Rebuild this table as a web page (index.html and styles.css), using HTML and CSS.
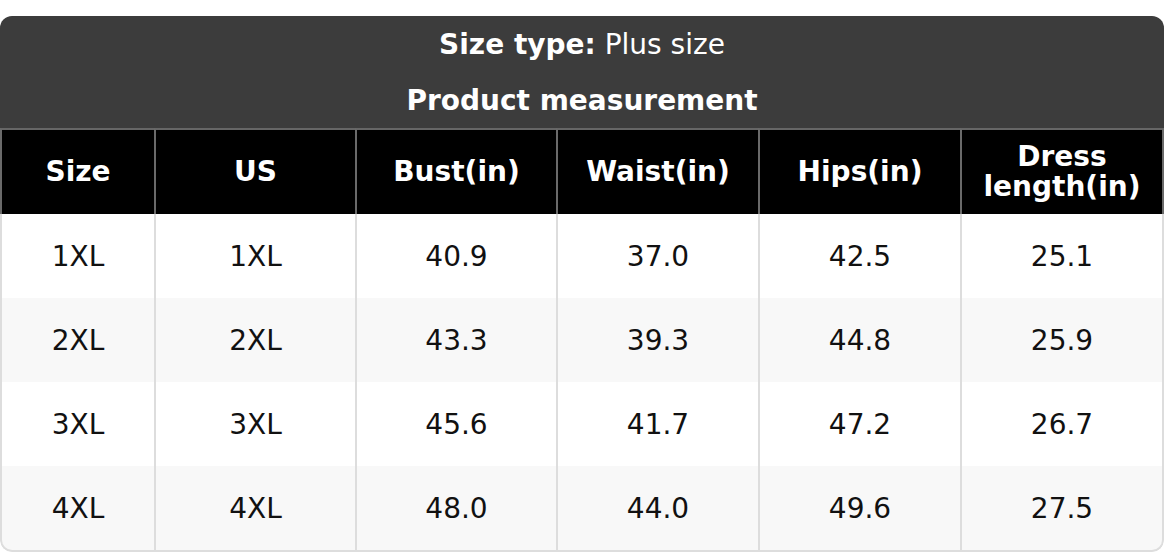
FILE: index.html
```html
<!DOCTYPE html>
<html lang="en">
<head>
<meta charset="utf-8">
<title>Size chart</title>
<link rel="stylesheet" href="styles.css">
</head>
<body>
<div class="page">
  <div class="chart">
    <div class="title"><span class="label">Size type:</span>&nbsp;Plus size</div>
    <div class="title bold">Product measurement</div>
    <table class="grid">
      <colgroup>
        <col class="w-size">
        <col class="w-a">
        <col class="w-a">
        <col class="w-b">
        <col class="w-b">
        <col>
      </colgroup>
      <thead>
        <tr>
          <th>Size</th>
          <th>US</th>
          <th>Bust(in)</th>
          <th>Waist(in)</th>
          <th>Hips(in)</th>
          <th>Dress<br>length(in)</th>
        </tr>
      </thead>
      <tbody>
        <tr><td>1XL</td><td>1XL</td><td>40.9</td><td>37.0</td><td>42.5</td><td>25.1</td></tr>
        <tr><td>2XL</td><td>2XL</td><td>43.3</td><td>39.3</td><td>44.8</td><td>25.9</td></tr>
        <tr><td>3XL</td><td>3XL</td><td>45.6</td><td>41.7</td><td>47.2</td><td>26.7</td></tr>
        <tr><td>4XL</td><td>4XL</td><td>48.0</td><td>44.0</td><td>49.6</td><td>27.5</td></tr>
      </tbody>
    </table>
  </div>
</div>
</body>
</html>
```
FILE: styles.css
```css
html, body {
  margin: 0;
  padding: 0;
  background: #ffffff;
}
.page {
  padding-top: 16px;
  font-family: "DejaVu Sans", Verdana, sans-serif;
  font-size: 28px;
}
.chart {
  width: 1164px;
  border-radius: 12px;
  overflow: hidden;
}
.title {
  height: 56px;
  display: flex;
  align-items: center;
  justify-content: center;
  background: #3c3c3c;
  color: #ffffff;
}
.title .label,
.title.bold {
  font-weight: bold;
}
.grid {
  width: 100%;
  table-layout: fixed;
  border-collapse: separate;
  border-spacing: 0;
}
.grid .w-size { width: 154px; }
.grid .w-a { width: 201px; }
.grid .w-b { width: 202px; }
.grid th,
.grid td {
  box-sizing: border-box;
  padding: 0;
  text-align: center;
  vertical-align: middle;
}
.grid th {
  height: 86px;
  background: #000000;
  color: #ffffff;
  font-weight: bold;
  line-height: 30px;
  border-top: 2px solid #666666;
  border-left: 2px solid #6a6a6a;
}
.grid th:last-child {
  border-right: 2px solid #6a6a6a;
}
.grid td {
  height: 84px;
  color: #111111;
  border-left: 2px solid #dddddd;
}
.grid td:last-child {
  border-right: 2px solid #dddddd;
}
.grid tbody tr:nth-child(even) td {
  background: #f8f8f8;
}
.grid tbody tr:last-child td {
  height: 86px;
  border-bottom: 2px solid #dddddd;
}
.grid tbody tr:last-child td:first-child {
  border-bottom-left-radius: 12px;
}
.grid tbody tr:last-child td:last-child {
  border-bottom-right-radius: 12px;
}
```
